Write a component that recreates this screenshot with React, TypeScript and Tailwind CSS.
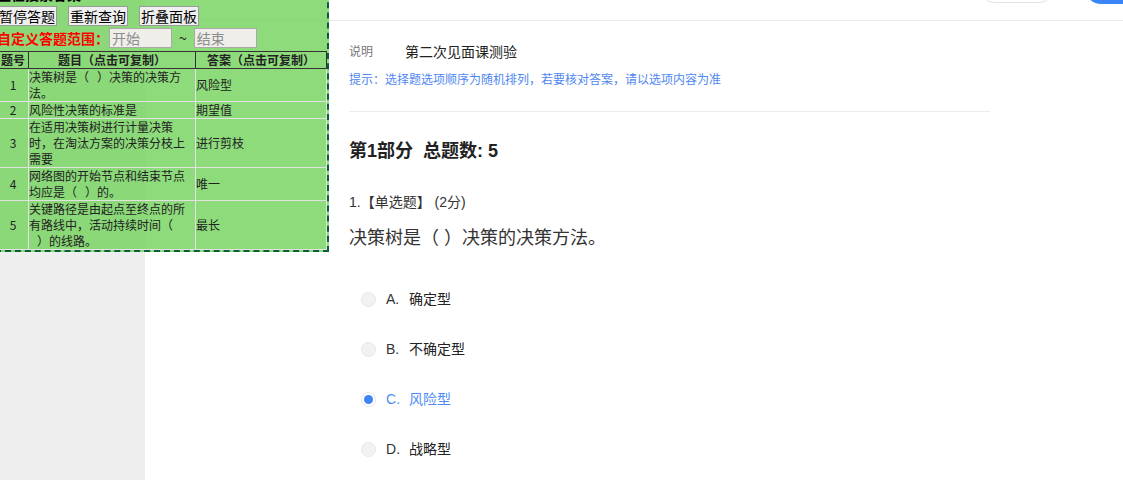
import React from "react";

const rows = [
  { no: 1, q: ["决策树是（\u00a0\u00a0\u00a0）决策的决策方", "法。"], a: "风险型" },
  { no: 2, q: ["风险性决策的标准是"], a: "期望值" },
  { no: 3, q: ["在适用决策树进行计量决策", "时，在淘汰方案的决策分枝上", "需要"], a: "进行剪枝" },
  { no: 4, q: ["网络图的开始节点和结束节点", "均应是（\u00a0\u00a0\u00a0）的。"], a: "唯一" },
  { no: 5, q: ["关键路径是由起点至终点的所", "有路线中，活动持续时间（", "\u00a0\u00a0\u00a0）的线路。"], a: "最长" },
];

const options = [
  { key: "A", text: "确定型" },
  { key: "B", text: "不确定型" },
  { key: "C", text: "风险型", checked: true },
  { key: "D", text: "战略型" },
];

function AnswerPanel() {
  return (
    <div className="absolute left-[-5px] top-[-18px] w-[334px] border-2 border-dashed border-[#0b5c3d] bg-[rgba(112,210,90,0.8)] font-['Noto_Sans_CJK_SC',sans-serif] text-[14px] text-black">
      {/* status */}
      <div className="h-[20px] leading-[20px] font-bold">正在搜索答案...</div>

      {/* controls */}
      <div className="flex h-[22px] items-start gap-[11px] pt-[2px]">
        {["暂停答题", "重新查询", "折叠面板"].map((t) => (
          <button
            key={t}
            className="h-[20px] border border-[#9a9a9a] bg-[#f0f0f0] px-[1px] text-[14px] leading-[18px] text-black"
          >
            {t}
          </button>
        ))}
      </div>

      <div className="mt-[1px] flex h-[22px] items-center">
        <span className="font-bold text-[#ff0000] leading-[20px]">自定义答题范围：</span>
        <input
          placeholder="开始"
          className="h-[20px] w-[63px] border border-[#a9a9a9] bg-[#efeee9] px-[2px] text-[14px] leading-[18px] placeholder:text-[#8d8d8d]"
        />
        <span className="mx-[7px] leading-[20px] text-[#222]">~</span>
        <input
          placeholder="结束"
          className="h-[20px] w-[63px] border border-[#a9a9a9] bg-[#efeee9] px-[2px] text-[14px] leading-[18px] placeholder:text-[#8d8d8d]"
        />
      </div>

      {/* answers */}
      <table className="mt-[2px] w-full table-fixed border-collapse text-[12px] leading-4 text-[#222]">
        <colgroup>
          <col className="w-[31px]" />
          <col className="w-[167px]" />
          <col />
        </colgroup>
        <thead>
          <tr>
            <th className="border border-[#333] p-0 font-bold">题号</th>
            <th className="border border-[#333] p-0 font-bold">题目（点击可复制）</th>
            <th className="border border-[#333] p-0 font-bold">答案（点击可复制）</th>
          </tr>
        </thead>
        <tbody>
          {rows.map((r) => (
            <tr key={r.no}>
              <td className="border border-[#e2e2e2] p-0 text-center">{r.no}</td>
              <td className="border border-[#e2e2e2] p-0 text-left">
                {r.q.map((l, i) => (
                  <div key={i} className="whitespace-nowrap">{l}</div>
                ))}
              </td>
              <td className="border border-[#e2e2e2] p-0 text-left">{r.a}</td>
            </tr>
          ))}
        </tbody>
      </table>
    </div>
  );
}

function Radio({ checked }: { checked?: boolean }) {
  if (checked) {
    return (
      <span className="flex h-[15px] w-[15px] items-center justify-center rounded-full border border-[#e6e6e6] bg-white">
        <span className="h-[9px] w-[9px] rounded-full bg-[#3d85f5]" />
      </span>
    );
  }
  return <span className="h-[15px] w-[15px] rounded-full border border-[#e8e8e8] bg-[#f2f2f2]" />;
}

export default function App() {
  return (
    <div className="relative flex h-[480px] w-full overflow-hidden bg-white font-['Liberation_Sans','Noto_Sans_CJK_SC',sans-serif]">
      <aside className="w-[145px] shrink-0 bg-[#eeeeee]" />

      <main className="flex-1 overflow-hidden bg-white">
        {/* top bar */}
        <div className="flex h-[21px] justify-end border-b border-[#ececec]">
          <div className="-mt-[29px] h-[32px] w-[76px] rounded-full border border-[#e3e3e3] bg-white" />
          <div className="-mr-[42px] -mt-[28px] ml-[30px] h-[32px] w-[80px] rounded-full bg-[#3b86f7]" />
        </div>

        <div className="ml-[204px] w-[641px] text-[#333]">
          <div className="mt-[21px] flex h-[20px] items-center">
            <span className="w-[56px] text-[12px] text-[#777]">说明</span>
            <span className="text-[14px] text-[#222]">第二次见面课测验</span>
          </div>
          <div className="mt-[9px] h-[18px] text-[12px] leading-[18px] text-[#4f87f0]">
            提示：选择题选项顺序为随机排列，若要核对答案，请以选项内容为准
          </div>
          <div className="mt-[22px] border-t border-[#ececec]" />

          <div className="mt-[27px] h-[24px] text-[18px] font-bold leading-[24px] text-[#222] whitespace-pre">
            第1部分  总题数: 5
          </div>

          <div className="mt-[30px] h-[18px] text-[14px] leading-[18px] text-[#333]">
            1.【单选题】 (2分)
          </div>

          <div className="mt-[14px] h-[26px] text-[18px] leading-[26px] text-[#333]">
            决策树是（ ）决策的决策方法。
          </div>

          <div className="mt-[36px] flex flex-col gap-[26px]">
            {options.map((o) => (
              <div key={o.key} className="flex h-[24px] items-center pl-[12px]">
                <Radio checked={o.checked} />
                <span
                  className={`ml-[10px] w-[23px] text-[14px] ${o.checked ? "text-[#4d8cf5]" : "text-[#333]"}`}
                >
                  {o.key}.
                </span>
                <span className={`text-[14px] ${o.checked ? "text-[#4d8cf5]" : "text-[#222]"}`}>{o.text}</span>
              </div>
            ))}
          </div>
        </div>
      </main>

      <AnswerPanel />
    </div>
  );
}
